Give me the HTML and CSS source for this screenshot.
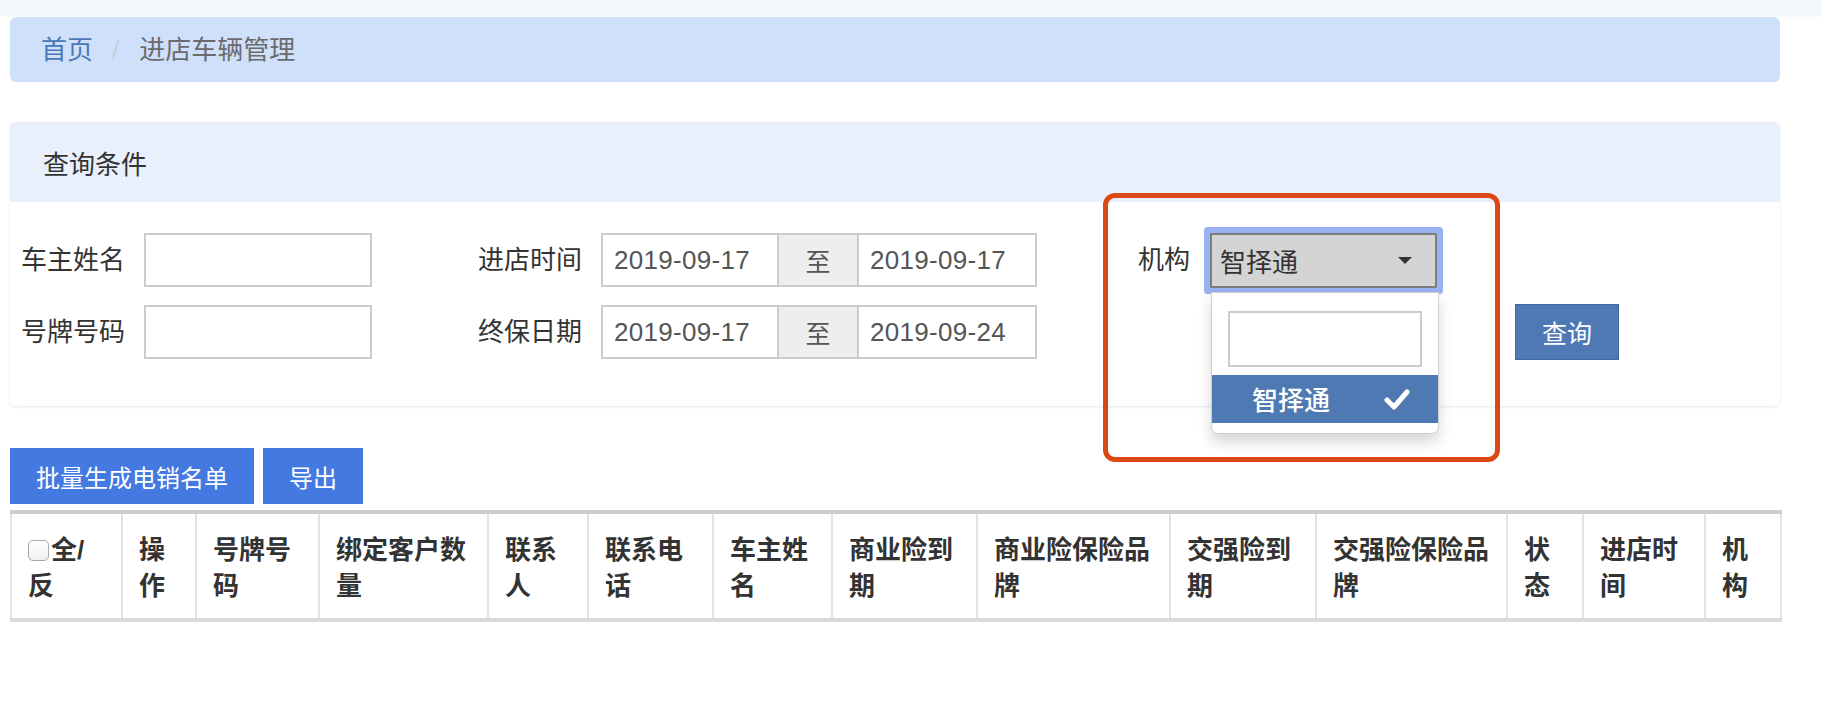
FILE: index.html
```html
<!DOCTYPE html>
<html lang="zh-CN">
<head>
<meta charset="utf-8">
<title>进店车辆管理</title>
<link rel="stylesheet" href="styles.css">
</head>
<body>
<div class="topbar"></div>
<div class="main">
  <div class="breadcrumb">
    <span class="crumb-link">首页</span>
    <span class="crumb-sep">/</span>
    <span class="crumb-current">进店车辆管理</span>
  </div>

  <div class="panel">
    <div class="panel-head">查询条件</div>
    <div class="panel-body">
      <div class="form">
        <div class="group g1">
          <span class="label">车主姓名</span>
          <div class="text-input"></div>
          <span class="label">号牌号码</span>
          <div class="text-input"></div>
        </div>
        <div class="group g2">
          <span class="label">进店时间</span>
          <div class="daterange">
            <div class="date d1">2019-09-17</div>
            <div class="addon">至</div>
            <div class="date d2">2019-09-17</div>
          </div>
          <span class="label">终保日期</span>
          <div class="daterange">
            <div class="date d1">2019-09-17</div>
            <div class="addon">至</div>
            <div class="date d2">2019-09-24</div>
          </div>
        </div>
        <div class="g3">
          <span class="label">机构</span>
          <div class="select">
            <span class="select-text">智择通</span>
            <span class="caret"></span>
            <div class="dropdown">
              <div class="dd-search"></div>
              <div class="dd-option">
                <span>智择通</span>
                <svg class="check" viewBox="0 0 26 22" width="26" height="22"><path d="M3 12 L10 19 L23 4" fill="none" stroke="#fff" stroke-width="5" stroke-linecap="round" stroke-linejoin="round"/></svg>
              </div>
            </div>
          </div>
        </div>
        <button class="btn-query">查询</button>
      </div>
    </div>
  </div>

  <div class="actions">
    <button class="btn-blue">批量生成电销名单</button>
    <button class="btn-blue">导出</button>
  </div>

  <table class="grid">
    <colgroup>
      <col class="c1"><col class="c2"><col class="c3"><col class="c4"><col class="c5"><col class="c6"><col class="c7"><col class="c8"><col class="c9"><col class="c10"><col class="c11"><col class="c12"><col class="c13"><col class="c14">
    </colgroup>
    <thead>
      <tr>
        <th><span class="checkbox"></span>全/反</th>
        <th>操作</th>
        <th>号牌号码</th>
        <th>绑定客户数量</th>
        <th>联系人</th>
        <th>联系电话</th>
        <th>车主姓名</th>
        <th>商业险到期</th>
        <th>商业险保险品牌</th>
        <th>交强险到期</th>
        <th>交强险保险品牌</th>
        <th>状态</th>
        <th>进店时间</th>
        <th>机构</th>
      </tr>
    </thead>
  </table>
</div>
<div class="annotation"></div>
</body>
</html>
```

FILE: styles.css
```css
html, body {
  margin: 0;
  padding: 0;
  background: #ffffff;
}
body {
  position: relative;
  font-family: "Liberation Sans", "Noto Sans CJK SC", sans-serif;
  color: #333333;
  width: 1822px;
  height: 714px;
  overflow: hidden;
}
.topbar {
  height: 15px;
  background: #f3f6fb;
  box-shadow: 0 1px 3px rgba(0, 0, 0, 0.05);
}
.main {
  padding: 2px 42px 0 10px;
}
.breadcrumb {
  height: 65px;
  background: #cfe0fb;
  border-radius: 6px;
  display: flex;
  align-items: center;
  padding-left: 31px;
  font-size: 26px;
  line-height: 30px;
}
.crumb-link { color: #4a77b6; }
.crumb-sep { color: #c5cdd8; margin: 0 20px 0 19px; }
.crumb-current { color: #6b6b6b; }

.panel {
  margin-top: 40px;
  border-radius: 6px;
  box-shadow: 0 1px 3px rgba(40, 70, 120, 0.12);
  background: #fff;
}
.panel-head {
  height: 80px;
  background: #e8f0fc;
  border-radius: 6px 6px 0 0;
  display: flex;
  align-items: center;
  padding-left: 33px;
  font-size: 26px;
  color: #333;
}
.panel-body {
  padding: 31px 0 47px 11px;
}
.form {
  display: flex;
  align-items: stretch;
}
.group {
  display: grid;
  grid-template-columns: auto auto;
  grid-auto-rows: 54px;
  row-gap: 18px;
  column-gap: 19px;
  align-items: center;
}
.label {
  font-size: 26px;
  line-height: 30px;
  color: #333;
}
.text-input {
  width: 228px;
  height: 54px;
  box-sizing: border-box;
  border: 2px solid #cccccc;
  background: #fff;
}
.g2 { margin-left: 106px; }
.daterange {
  display: flex;
  height: 54px;
}
.date {
  box-sizing: border-box;
  height: 54px;
  border: 2px solid #cccccc;
  padding-left: 11px;
  display: flex;
  align-items: center;
  font-size: 26px;
  color: #555;
  letter-spacing: 0.3px;
  background: #fff;
  white-space: nowrap;
}
.d1 { width: 178px; }
.d2 { width: 180px; }
.addon {
  box-sizing: border-box;
  width: 78px;
  height: 54px;
  border-top: 2px solid #cccccc;
  border-bottom: 2px solid #cccccc;
  background: #eeeeee;
  display: flex;
  align-items: center;
  justify-content: center;
  font-size: 25px;
  color: #555;
}
.g3 {
  margin-left: 101px;
  display: flex;
  align-items: center;
  align-self: flex-start;
  height: 54px;
  gap: 20px;
}
.select {
  position: relative;
  box-sizing: border-box;
  width: 227px;
  height: 55px;
  border: 2px solid #7d7d7d;
  border-radius: 1px;
  background: #d4d4d4;
  box-shadow: 0 0 0 6px #99b2f1;
  display: flex;
  align-items: center;
  padding-left: 8px;
  font-size: 26px;
  color: #333;
}
.select-text { flex: 1; }
.caret {
  width: 0;
  height: 0;
  border-left: 7px solid transparent;
  border-right: 7px solid transparent;
  border-top: 7px solid #333;
  margin-right: 23px;
}
.dropdown {
  position: absolute;
  top: 57px;
  left: -1px;
  width: 228px;
  box-sizing: border-box;
  background: #fff;
  border: 1px solid #cfcfcf;
  border-radius: 0 0 7px 7px;
  box-shadow: 0 8px 14px rgba(0, 0, 0, 0.16);
  padding: 18px 0 10px 0;
  z-index: 5;
}
.dd-search {
  box-sizing: border-box;
  width: 194px;
  height: 56px;
  margin-left: 16px;
  border: 2px solid #cccccc;
}
.dd-option {
  margin-top: 8px;
  height: 48px;
  background: #4f79b3;
  color: #fff;
  display: flex;
  align-items: center;
  justify-content: space-between;
  padding: 0 28px 0 40px;
  font-size: 26px;
  font-weight: 500;
}
.check { display: block; }

.btn-query {
  margin-left: 78px;
  align-self: flex-end;
  width: 104px;
  height: 56px;
  margin-bottom: -1px;
  background: #4f79b4;
  border: 1px solid #40679f;
  color: #fff;
  font-family: "Liberation Sans", "Noto Sans CJK SC", sans-serif;
  font-size: 25px;
  padding: 0;
}

.actions {
  margin-top: 42px;
  display: flex;
  gap: 9px;
}
.btn-blue {
  height: 56px;
  padding: 0 26px;
  background: #4479e1;
  border: none;
  color: #fff;
  font-family: "Liberation Sans", "Noto Sans CJK SC", sans-serif;
  font-size: 24px;
}

.grid {
  margin-top: 6px;
  width: 1770px;
  table-layout: fixed;
  border-collapse: collapse;
  border-top: 4px solid #cdcdcd;
  border-bottom: 4px solid #dadada;
}
.c1 { width: 111px; }
.c2 { width: 74px; }
.c3 { width: 123px; }
.c4 { width: 169px; }
.c5 { width: 100px; }
.c6 { width: 125px; }
.c7 { width: 119px; }
.c8 { width: 145px; }
.c9 { width: 193px; }
.c10 { width: 146px; }
.c11 { width: 191px; }
.c12 { width: 76px; }
.c13 { width: 122px; }
.c14 { width: 76px; }
.grid th {
  border-left: 2px solid #e2e2e2;
  border-right: 2px solid #e2e2e2;
  padding: 18px 15px 14px 16px;
  text-align: left;
  vertical-align: bottom;
  font-size: 26px;
  line-height: 36px;
  font-weight: bold;
  color: #333;
  height: 104px;
  box-sizing: border-box;
}
.checkbox {
  display: inline-block;
  width: 21px;
  height: 21px;
  box-sizing: border-box;
  border: 1px solid #a9a9a9;
  border-radius: 5px;
  background: linear-gradient(#ffffff, #f0f0f0);
  vertical-align: -2px;
  margin-right: 2px;
}

.annotation {
  position: absolute;
  left: 1103px;
  top: 193px;
  width: 397px;
  height: 269px;
  box-sizing: border-box;
  border: 5px solid #db4814;
  border-radius: 12px;
  z-index: 10;
  pointer-events: none;
}
```
